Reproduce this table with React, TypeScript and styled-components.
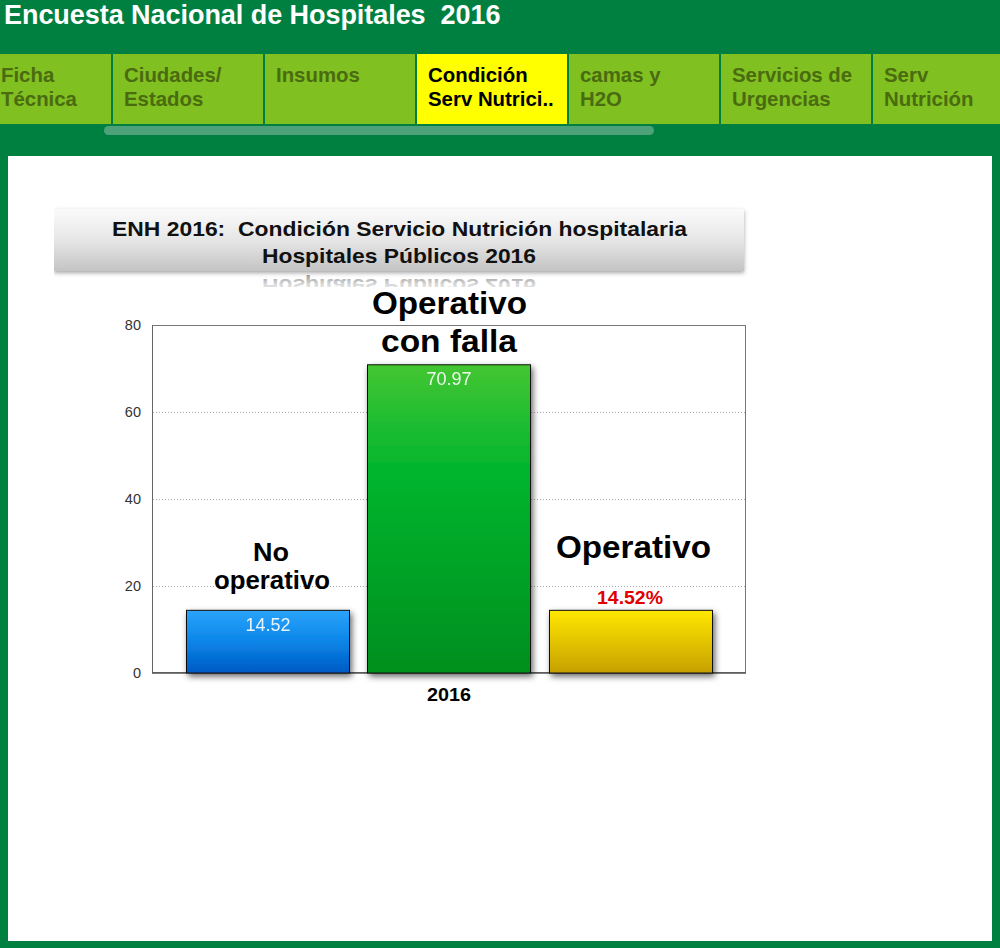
import React from "react";
import styled, { createGlobalStyle } from "styled-components";

const GlobalStyle = createGlobalStyle`
  html, body {
    margin: 0;
    padding: 0;
    background: #008040;
  }
  body {
    font-family: "Liberation Sans", Arial, sans-serif;
  }
`;

const tabs = [
  { label: ["Ficha", "Técnica"], width: 111, pad: 1 },
  { label: ["Ciudades/", "Estados"] },
  { label: ["Insumos"] },
  { label: ["Condición", "Serv Nutrici.."], active: true },
  { label: ["camas y", "H2O"] },
  { label: ["Servicios de", "Urgencias"] },
  { label: ["Serv", "Nutrición"] },
];

const Page = styled.div`
  width: 1000px;
  height: 948px;
  overflow: hidden;
  background: #008040;
`;

const Header = styled.header`
  height: 54px;
  padding-left: 4px;
  box-sizing: border-box;
`;

const Title = styled.h1`
  margin: 0;
  font-size: 27px;
  line-height: 30px;
  font-weight: bold;
  color: #ffffff;
  white-space: pre;
  letter-spacing: -0.05px;
`;

const TabRow = styled.nav`
  display: flex;
  gap: 2px;
  height: 70px;
  overflow: hidden;
`;

const Tab = styled.div<{ $active?: boolean; $width?: number; $pad?: number }>`
  flex: 0 0 ${(p) => p.$width ?? 150}px;
  box-sizing: border-box;
  padding: 9px 0 0 ${(p) => p.$pad ?? 11}px;
  background: ${(p) => (p.$active ? "#ffff00" : "#80c020")};
  color: ${(p) => (p.$active ? "#000000" : "#4a6b10")};
  font-size: 20.4px;
  line-height: 24px;
  font-weight: bold;
  white-space: nowrap;
`;

const ScrollArea = styled.div`
  height: 32px;
  padding-top: 2px;
  box-sizing: border-box;
`;

const ScrollThumb = styled.div`
  margin-left: 104px;
  width: 550px;
  height: 9px;
  border-radius: 5px;
  background: #4da27a;
`;

const Panel = styled.main`
  margin: 0 8px;
  height: 785px;
  background: #ffffff;
  padding: 50px 0 0 46px;
  box-sizing: border-box;
`;

const ChartSvg = styled.svg`
  display: block;
  font-family: "Liberation Sans", Arial, sans-serif;
`;

type Bar = { x: number; value: number; fill: string; label?: string };

const X0 = 54;
const Y0 = 206;
const base = 673;
const scale = (673 - 325) / 80;

const bars: Bar[] = [
  { x: 186, value: 14.52, fill: "url(#gBlue)", label: "14.52" },
  { x: 367, value: 70.97, fill: "url(#gGreen)", label: "70.97" },
  { x: 549, value: 14.52, fill: "url(#gYellow)" },
];

function Chart() {
  return (
    <ChartSvg width={700} height={500} viewBox="0 0 700 500">
      <defs>
        <linearGradient id="gTitle" x1="0" y1="0" x2="0" y2="1">
          <stop offset="0" stopColor="#fbfbfb" />
          <stop offset="0.5" stopColor="#e6e6e6" />
          <stop offset="1" stopColor="#c4c4c4" />
        </linearGradient>
        <linearGradient id="gRefl" x1="0" y1="0" x2="0" y2="1">
          <stop offset="0" stopColor="#ffffff" />
          <stop offset="0.6" stopColor="#d8d8d8" />
          <stop offset="1" stopColor="#9a9a9a" />
        </linearGradient>
        <linearGradient id="gBlue" x1="0" y1="0" x2="0" y2="1">
          <stop offset="0" stopColor="#2ba4fb" />
          <stop offset="0.5" stopColor="#0a85e8" />
          <stop offset="1" stopColor="#005ac4" />
        </linearGradient>
        <linearGradient id="gGreen" x1="0" y1="0" x2="0" y2="1">
          <stop offset="0" stopColor="#44c632" />
          <stop offset="0.35" stopColor="#00b52e" />
          <stop offset="1" stopColor="#008f1e" />
        </linearGradient>
        <linearGradient id="gYellow" x1="0" y1="0" x2="0" y2="1">
          <stop offset="0" stopColor="#ffe800" />
          <stop offset="1" stopColor="#c6a000" />
        </linearGradient>
        <filter id="shadow" x="-10%" y="-10%" width="130%" height="130%">
          <feDropShadow dx="2" dy="3" stdDeviation="3" floodColor="#000" floodOpacity="0.6" />
        </filter>
        <filter id="titleShadow" x="-5%" y="-20%" width="110%" height="150%">
          <feDropShadow dx="0" dy="2" stdDeviation="2" floodColor="#000" floodOpacity="0.35" />
        </filter>
        <clipPath id="reflClip">
          <rect x={54} y={274} width={690} height={13} />
        </clipPath>
      </defs>
      <g transform={`translate(${-X0},${-Y0})`}>
        {/* title plate */}
        <rect x={54} y={209} width={690} height={62} fill="url(#gTitle)" filter="url(#titleShadow)" />
        <g fontWeight="bold" fontSize={21} fill="#111" textAnchor="middle">
          <text x={399.5} y={236} textLength={575} lengthAdjust="spacingAndGlyphs">
            {"ENH 2016:\u00a0 Condición Servicio Nutrición hospitalaria"}
          </text>
          <text x={399} y={263} textLength={274} lengthAdjust="spacingAndGlyphs">
            Hospitales Públicos 2016
          </text>
          <g clipPath="url(#reflClip)">
            <text
              x={399}
              y={263}
              transform="translate(0,542) scale(1,-1)"
              textLength={274}
              lengthAdjust="spacingAndGlyphs"
              fill="url(#gRefl)"
            >
              Hospitales Públicos 2016
            </text>
          </g>
        </g>

        {/* plot area */}
        <rect x={152.5} y={325.5} width={593} height={347} fill="#fff" stroke="#777" strokeWidth={1} />
        {[20, 40, 60].map((v) => (
          <line
            key={v}
            x1={153}
            x2={745}
            y1={base - v * scale + 0.5}
            y2={base - v * scale + 0.5}
            stroke="#aaa"
            strokeDasharray="1 2"
          />
        ))}
        <line x1={152} x2={746} y1={673} y2={673} stroke="#555" strokeWidth={1.5} />
        <line x1={152.5} x2={152.5} y1={325} y2={674} stroke="#666" />
        <g fontSize={14.5} fill="#333" textAnchor="end">
          {[0, 20, 40, 60, 80].map((v) => (
            <text key={v} x={141} y={base - v * scale + 5}>
              {v}
            </text>
          ))}
        </g>

        {bars.map((b) => {
          const h = b.value * scale;
          return (
            <g key={b.x}>
              <rect
                x={b.x + 0.5}
                y={base - h + 0.5}
                width={163}
                height={h - 0.5}
                fill={b.fill}
                stroke="#111"
                strokeWidth={1}
                filter="url(#shadow)"
              />
              {b.label && (
                <text x={b.x + 82} y={base - h + 21} fill="#fff" fontSize={18} textAnchor="middle" opacity={0.9}>
                  {b.label}
                </text>
              )}
            </g>
          );
        })}

        {/* category labels */}
        <g fontWeight="bold" fill="#000" textAnchor="middle">
          <text x={449.5} y={314} fontSize={32} textLength={155} lengthAdjust="spacingAndGlyphs">
            Operativo
          </text>
          <text x={449} y={352} fontSize={32} textLength={136} lengthAdjust="spacingAndGlyphs">
            con falla
          </text>
          <text x={271} y={561} fontSize={25} textLength={36} lengthAdjust="spacingAndGlyphs">
            No
          </text>
          <text x={272} y={589} fontSize={25} textLength={116} lengthAdjust="spacingAndGlyphs">
            operativo
          </text>
          <text x={633.5} y={558} fontSize={32} textLength={155} lengthAdjust="spacingAndGlyphs">
            Operativo
          </text>
          <text x={630} y={604} fontSize={18} fill="#e00000" textLength={66} lengthAdjust="spacingAndGlyphs">
            14.52%
          </text>
          <text x={449} y={701} fontSize={19} textLength={44} lengthAdjust="spacingAndGlyphs">
            2016
          </text>
        </g>
      </g>
    </ChartSvg>
  );
}

export default function App() {
  return (
    <Page>
      <GlobalStyle />
      <Header>
        <Title>{"Encuesta Nacional de Hospitales  2016"}</Title>
      </Header>
      <TabRow>
        {tabs.map((t) => (
          <Tab key={t.label.join(" ")} $active={t.active} $width={t.width} $pad={t.pad}>
            {t.label.map((l) => (
              <div key={l}>{l}</div>
            ))}
          </Tab>
        ))}
      </TabRow>
      <ScrollArea>
        <ScrollThumb />
      </ScrollArea>
      <Panel>
        <Chart />
      </Panel>
    </Page>
  );
}
